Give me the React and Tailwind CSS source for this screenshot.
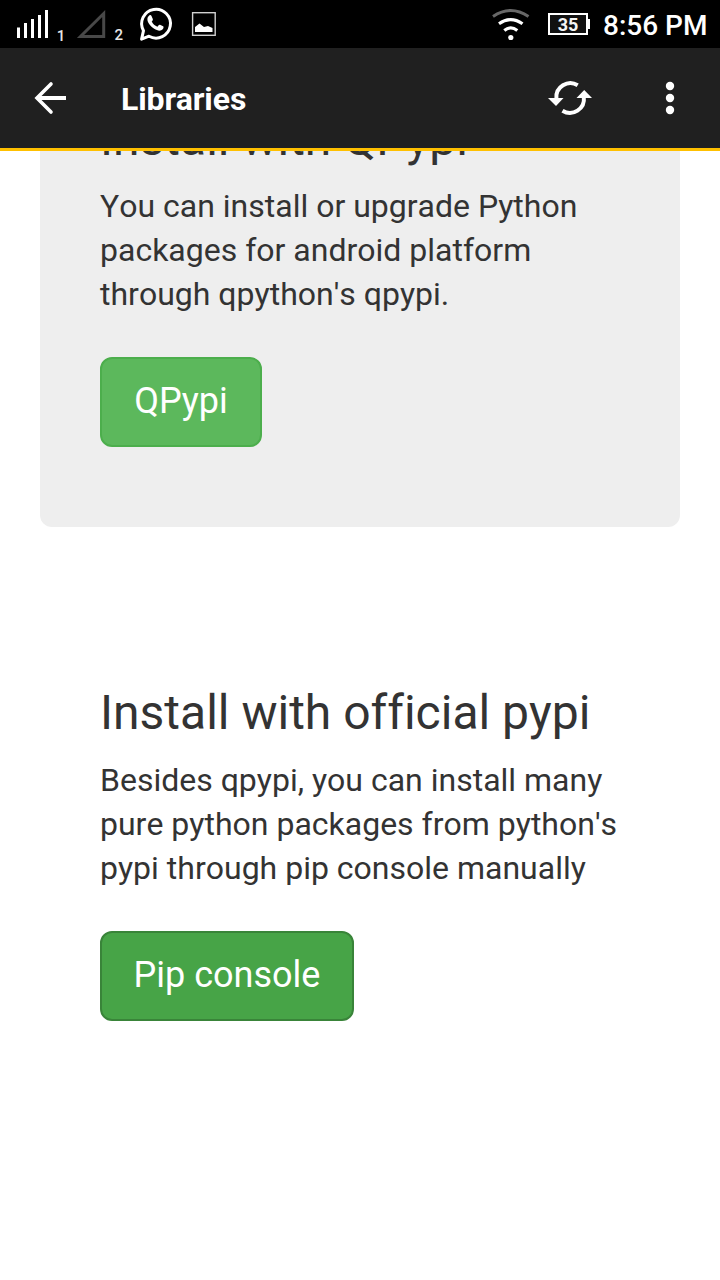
function StatusBar() {
  return (
    <div className="flex h-12 shrink-0 items-center bg-black text-white">
      <svg className="h-12 w-56 shrink-0" viewBox="0 0 224 48" fill="none">
        <path d="M18.500 27.500V38M25.500 23V38M32.500 19V38M39.500 15V38M46.500 10V38" stroke="#fff" strokeWidth="3" strokeLinecap="butt" />
        <text x="56.800" y="40.500" fill="#e8e8e8" fontFamily="Roboto, sans-serif" fontSize="15" fontWeight="500">1</text>
        <path d="M80.500 36.500H103.700V13.500Z" stroke="#484848" strokeWidth="3" />
        <text x="114.500" y="40" fill="#e8e8e8" fontFamily="Roboto, sans-serif" fontSize="15" fontWeight="500">2</text>
        <g transform="translate(-1 -0.700)">
          <path d="M142.600 39.900L144.500 31.400A14.400 14.400 0 1 1 150 36.900Z" stroke="#fff" strokeWidth="3" strokeLinejoin="round" />
          <path d="M150.300 16.200C151.100 15.500 152.100 15.800 152.500 16.700L153.800 19.700C154.100 20.500 153.600 21.300 152.700 22.300C154 24.900 155.800 26.500 158.400 27.400C159.600 25.800 160.100 25.100 161 25.500L164.100 27C165 27.500 164.500 29 163.700 30C161.900 32.100 158.400 31.600 155.200 29.500C151.500 27.100 148.300 23 148.400 19.900C148.400 18.400 149.200 17.100 150.300 16.200Z" fill="#fff" />
        </g>
        <rect x="192.600" y="12.700" width="22.600" height="22.600" stroke="#d0d0d0" strokeWidth="1.400" />
        <path d="M195 32V27L199.500 23.500L204 27L208 26L212.500 28V32Z" fill="#fff" />
      </svg>
      <div className="flex-1" />
      <svg className="h-12 w-[108px] shrink-0" viewBox="488 0 108 48" fill="none">
        <path d="M493 16.500Q510.700 4.500 528.500 16.500" stroke="#686868" strokeWidth="3" />
        <path d="M499 23.800Q510.700 15.500 522.500 23.800M504.300 30.500Q510.700 25.300 517.300 30.500" stroke="#fff" strokeWidth="3.200" />
        <circle cx="510.800" cy="37.500" r="2.600" fill="#fff" />
        <rect x="549" y="14" width="38" height="20" fill="#111" stroke="#fff" strokeWidth="2" />
        <path d="M588 19H590V29H588Z" fill="#fff" />
        <text x="568" y="31" textAnchor="middle" fill="#f4f4f4" fontFamily="Roboto, sans-serif" fontSize="18" fontWeight="700">35</text>
      </svg>
      <span className="w-[124px] pt-1 pl-[7px] font-[Roboto,sans-serif] text-[28px] leading-8 font-medium whitespace-nowrap">8:56 PM</span>
    </div>
  );
}

function Header() {
  return (
    <header className="flex h-[103px] shrink-0 items-center border-b-3 border-[#ffc000] bg-[#202020] text-white">
      <button className="flex h-full w-[100px] items-center justify-center" aria-label="Back">
        <svg className="h-10 w-10" viewBox="30 78 40 40" fill="none" stroke="#fff" strokeWidth="3.600">
          <path d="M66 98H37" strokeWidth="4" />
          <path d="M51 84L37 98L51 112" strokeLinecap="round" />
        </svg>
      </button>
      <h1 className="flex-1 pt-0.5 pl-[21px] text-[32px] leading-10 font-bold tracking-[-0.08px]">Libraries</h1>
      <button className="flex h-full w-[100px] items-center justify-center" aria-label="Refresh">
        <svg className="h-12 w-12" viewBox="546 74 48 48" fill="none">
          <path d="M577.700 85.300A14 14 0 0 0 556.400 98.500M562.500 110.700A14 14 0 0 0 583.800 97" stroke="#fff" strokeWidth="4" />
          <path d="M548 98H563.500L556 106ZM576.500 98H592L584.200 90Z" fill="#fff" />
        </svg>
      </button>
      <button className="flex h-full w-[100px] items-center justify-center" aria-label="More">
        <svg className="h-10 w-10" viewBox="650 78 40 40" fill="#fff">
          <circle cx="670" cy="86" r="4.200" />
          <circle cx="670" cy="98" r="4.200" />
          <circle cx="670" cy="110" r="4.200" />
        </svg>
      </button>
    </header>
  );
}

function Section({ title, lines, action, cardClass, buttonClass }) {
  return (
    <section className={`h-[474px] shrink-0 rounded-xl px-[60px] pt-[60px] ${cardClass}`}>
      <h2 className="text-[48px] leading-[52px] whitespace-nowrap">{title}</h2>
      <p className="mt-[19px] text-[32px] leading-11">
        {lines.map((line) => (
          <span key={line} className="block whitespace-nowrap">{line}</span>
        ))}
      </p>
      <button className={`mt-[41px] flex h-[90px] items-center justify-center rounded-xl border-2 pb-0.5 text-[36px] text-white ${buttonClass}`}>
        {action}
      </button>
    </section>
  );
}

export default function App() {
  return (
    <div className="flex h-[1280px] w-[720px] flex-col overflow-hidden bg-white font-[Roboto,sans-serif] text-[#333]">
      <StatusBar />
      <Header />
      <main className="flex min-h-0 flex-1 flex-col gap-[100px] overflow-hidden px-10 [font-kerning:none] [font-variant-ligatures:none]">
        <div className="-mt-[98px] shrink-0">
          <Section
            title="Install with QPypi"
            lines={["You can install or upgrade Python", "packages for android platform", "through qpython's qpypi."]}
            action="QPypi"
            cardClass="bg-[#eee]"
            buttonClass="w-[162px] border-[#4cae4c] bg-[#5cb85c]"
          />
        </div>
        <Section
          title="Install with official pypi"
          lines={["Besides qpypi, you can install many", "pure python packages from python's", "pypi through pip console manually"]}
          action="Pip console"
          cardClass="bg-white"
          buttonClass="w-[254px] border-[#398439] bg-[#47a447]"
        />
      </main>
    </div>
  );
}
